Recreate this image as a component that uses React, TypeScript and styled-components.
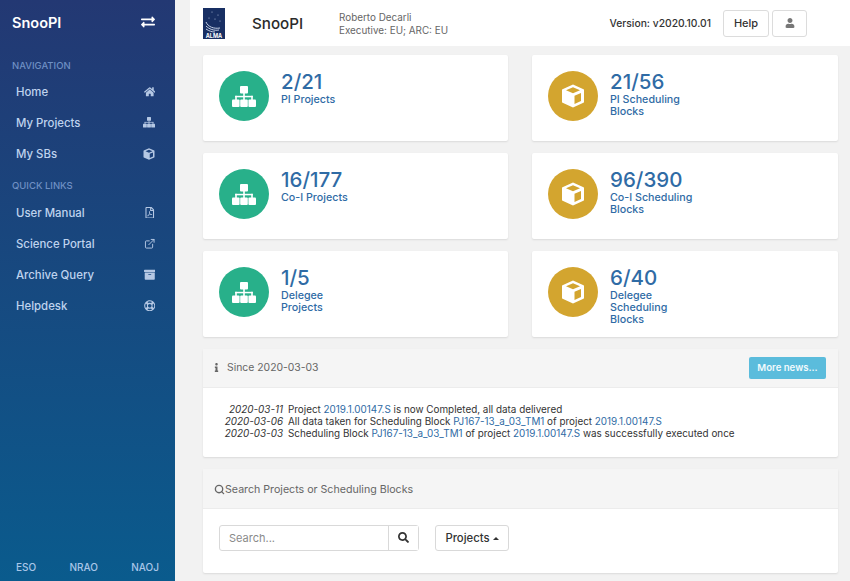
import React from 'react';
import styled, { createGlobalStyle } from 'styled-components';
import {
  FaArchive,
  FaExchangeAlt,
  FaHome,
  FaInfo,
  FaRegFilePdf,
  FaRegLifeRing,
  FaSearch,
  FaUser,
} from 'react-icons/fa';
import { FiExternalLink, FiSearch } from 'react-icons/fi';

const GlobalStyle = createGlobalStyle`
  html, body, #root { margin: 0; height: 100%; }
  body {
    background: #f2f2f2;
    font-family: Inter, "Open Sans", "Liberation Sans", sans-serif;
    overflow: hidden;
  }
  * { box-sizing: border-box; }
`;

const Page = styled.div`
  display: flex;
  width: 850px;
  height: 581px;
  overflow: hidden;
`;

const Sidebar = styled.aside`
  width: 175px;
  flex: none;
  display: flex;
  flex-direction: column;
  background: linear-gradient(180deg, #233873 0%, #0a5b8d 100%);
`;

const Brand = styled.div`
  height: 46px;
  padding: 0 20px 2px 12px;
  display: flex;
  align-items: center;
  justify-content: space-between;
  color: #fff;
  font-size: 14.5px;
  font-weight: 600;
  svg { font-size: 14px; }
`;

const SectionTitle = styled.div<{ $gap: number }>`
  margin-top: ${(p) => p.$gap}px;
  margin-bottom: 2px;
  padding-left: 12px;
  height: 16px;
  line-height: 16px;
  font-size: 9.5px;
  font-weight: 500;
  color: #6f90c4;
`;

const NavList = styled.nav`
  display: flex;
  flex-direction: column;
`;

const QuickList = styled(NavList)`
  margin-top: 1px;
`;

const NavItem = styled.a`
  height: 31px;
  padding: 0 20px 0 16px;
  display: flex;
  align-items: center;
  justify-content: space-between;
  font-size: 11.4px;
  font-weight: 500;
  color: #bfd3ee;
  svg { font-size: 11.5px; color: #b5c8e4; }
`;

const SidebarFooter = styled.div`
  margin-top: auto;
  height: 28px;
  padding: 0 16px;
  display: flex;
  align-items: center;
  justify-content: space-between;
  font-size: 10px;
  font-weight: 500;
  color: #a9c6e8;
`;

const Content = styled.main`
  flex: 1;
  min-width: 0;
  padding-left: 15px;
`;

const Header = styled.header`
  height: 46px;
  padding: 0 43px 0 13px;
  display: flex;
  align-items: center;
  background: #fff;
`;

const AppName = styled.div`
  margin-left: 27px;
  width: 87px;
  font-size: 15.2px;
  font-weight: 500;
  color: #2b2b2b;
`;

const UserInfo = styled.div`
  padding-top: 1px;
  font-size: 9.9px;
  line-height: 12.5px;
  color: #666;
`;

const Version = styled.div`
  margin-left: auto;
  margin-right: 12px;
  font-size: 10.3px;
  font-weight: 500;
  color: #333;
`;

const HeaderButton = styled.button<{ $wide?: boolean }>`
  width: ${(p) => (p.$wide ? 46 : 35)}px;
  height: 27px;
  margin-right: ${(p) => (p.$wide ? 3 : 0)}px;
  padding: 0;
  display: flex;
  align-items: center;
  justify-content: center;
  font: 500 11px Inter, sans-serif;
  color: #333;
  background: #fff;
  border: 1px solid #dcdcdc;
  border-radius: 3px;
  svg { font-size: 10px; color: #777; }
`;

const Body = styled.div`
  padding: 9px 12px 0 13px;
  display: flex;
  flex-direction: column;
`;

const StatGrid = styled.div`
  display: grid;
  grid-template-columns: 305px 306px;
  justify-content: space-between;
  row-gap: 12px;
`;

const Card = styled.section`
  background: #fff;
  border-radius: 2px;
  box-shadow: 0 1px 2px rgba(0, 0, 0, 0.1);
`;

const StatCard = styled(Card)`
  height: 86px;
  padding: 15px 16px 16px;
  display: flex;
  align-items: flex-start;
  gap: 12px;
`;

const StatIcon = styled.div<{ $color: string }>`
  width: 50px;
  height: 50px;
  margin-top: 1px;
  flex: none;
  display: flex;
  align-items: center;
  justify-content: center;
  border-radius: 50%;
  background: ${(p) => p.$color};
  color: #fff;
`;

const StatText = styled.div`
  color: #2f6ba5;
`;

const StatValue = styled.div`
  font-size: 20.5px;
  line-height: 24px;
  font-weight: 500;
`;

const StatLabel = styled.div`
  font-size: 10.7px;
  line-height: 12px;
  font-weight: 500;
  max-width: 85px;
`;

const NewsCard = styled(Card)`
  margin-top: 12px;
  height: 108px;
`;

const CardHeader = styled.div<{ $height: number }>`
  height: ${(p) => p.$height}px;
  display: flex;
  align-items: center;
  background: #f5f5f5;
  border-bottom: 1px solid #ececec;
  font-size: 10.4px;
  color: #666;
`;

const NewsHeader = styled(CardHeader)`
  padding: 0 12px 1px 9px;
  svg { font-size: 9px; color: #666; margin-right: 6px; }
`;

const MoreButton = styled.button`
  margin-left: auto;
  width: 77px;
  height: 22px;
  padding: 0;
  border: 0;
  border-radius: 2px;
  background: #5bbcdc;
  color: #f2fafd;
  font: 600 9.6px Inter, sans-serif;
`;

const NewsRows = styled.div`
  padding-top: 15px;
  display: grid;
  grid-template-columns: 80px 1fr;
  column-gap: 5px;
  font-size: 9.9px;
  line-height: 12px;
  color: #333;
`;

const NewsDate = styled.i`
  text-align: right;
  white-space: nowrap;
`;

const NewsLink = styled.a`
  color: #2f6ba5;
`;

const SearchCard = styled(Card)`
  margin-top: 12px;
  height: 104px;
`;

const SearchHeader = styled(CardHeader)`
  padding: 1px 0 0 11px;
  font-size: 10.65px;
  svg { font-size: 11px; color: #666; stroke-width: 3; }
`;

const SearchBar = styled.div`
  padding: 16px;
  display: flex;
  gap: 16px;
`;

const InputGroup = styled.div`
  width: 200px;
  height: 26px;
  display: flex;
  background: #fff;
  border: 1px solid #d9d9d9;
  border-radius: 3px;
`;

const SearchInput = styled.input`
  flex: 1;
  min-width: 0;
  padding: 0 9px;
  border: 0;
  outline: none;
  background: transparent;
  font: 400 11px Inter, sans-serif;
  &::placeholder { color: #8a8a8a; }
`;

const SearchButton = styled.button`
  width: 30px;
  padding: 0 0 2px;
  display: flex;
  align-items: center;
  justify-content: center;
  border: 0;
  border-left: 1px solid #d9d9d9;
  background: #fff;
  color: #333;
  svg { font-size: 11px; }
`;

const DropdownButton = styled.button`
  width: 74px;
  height: 26px;
  padding: 0;
  display: flex;
  align-items: center;
  justify-content: center;
  gap: 3px;
  background: #fff;
  border: 1px solid #d9d9d9;
  border-radius: 3px;
  font: 500 11.3px Inter, sans-serif;
  color: #333;
`;

const Caret = styled.span`
  width: 0;
  height: 0;
  border-left: 3px solid transparent;
  border-right: 3px solid transparent;
  border-bottom: 3px solid #333;
`;

const AlmaLogo = () => (
  <svg width="22" height="31" viewBox="0 0 22 31" aria-label="ALMA">
    <rect width="22" height="31" fill="#182f63" />
    <g fill="#c6d4ea">
      <circle cx="9" cy="4" r="0.5" />
      <circle cx="15" cy="7" r="0.5" />
      <circle cx="6" cy="10" r="0.5" />
      <circle cx="12" cy="11" r="0.5" />
      <circle cx="17" cy="13" r="0.5" />
    </g>
    <g fill="none" stroke="#d6e0f0" strokeWidth="0.9">
      <path d="M3 14c2 5 8 7 14 6" />
      <path d="M3 18c3 3 8 5 13 4" />
      <path d="M3 21c3 2 6 3 9 3" />
    </g>
    <text x="11" y="29.5" textAnchor="middle" fontSize="5.5" fontWeight="700" fill="#fff" fontFamily="Inter, sans-serif">
      ALMA
    </text>
  </svg>
);

const SitemapIcon = ({ size = 24 }: { size?: number }) => (
  <svg width={size} height={(size * 21) / 24} viewBox="0 0 24 21" fill="currentColor">
    <rect x="8" y="0" width="8" height="7.5" rx="1" />
    <rect x="11.2" y="7" width="1.6" height="7.5" />
    <rect x="3.2" y="9.8" width="17.6" height="1.5" />
    <rect x="3.2" y="9.8" width="1.6" height="4.5" />
    <rect x="19.2" y="9.8" width="1.6" height="4.5" />
    <rect x="0" y="13.5" width="7.6" height="7.5" rx="1" />
    <rect x="8.2" y="13.5" width="7.6" height="7.5" rx="1" />
    <rect x="16.4" y="13.5" width="7.6" height="7.5" rx="1" />
  </svg>
);

const CubeIcon = ({ size = 24 }: { size?: number }) => (
  <svg width={size} height={size} viewBox="0 0 24 24" fill="currentColor">
    <path
      fillRule="evenodd"
      d="M12 .5 22.5 5.2a1 1 0 0 1 .5.9v11.8a1 1 0 0 1-.6.9L12 23.5 1.6 18.8a1 1 0 0 1-.6-.9V6.100a1 1 0 0 1 .5-.9ZM12 3.300 5 6.300l7 3 7-3ZM13.500 11.700v8.200l6.500-3V8.900Z"
    />
  </svg>
);

const navItems = [
  { label: 'Home', icon: <FaHome /> },
  { label: 'My Projects', icon: <SitemapIcon size={12} /> },
  { label: 'My SBs', icon: <CubeIcon size={12} /> },
];

const quickLinks = [
  { label: 'User Manual', icon: <FaRegFilePdf /> },
  { label: 'Science Portal', icon: <FiExternalLink /> },
  { label: 'Archive Query', icon: <FaArchive /> },
  { label: 'Helpdesk', icon: <FaRegLifeRing /> },
];

const stats = [
  { value: '2/21', label: 'PI Projects', block: false },
  { value: '21/56', label: 'PI Scheduling Blocks', block: true },
  { value: '16/177', label: 'Co-I Projects', block: false },
  { value: '96/390', label: 'Co-I Scheduling Blocks', block: true },
  { value: '1/5', label: 'Delegee Projects', block: false },
  { value: '6/40', label: 'Delegee Scheduling Blocks', block: true },
];

const PROJECT = '2019.1.00147.S';
const BLOCK = 'PJ167-13_a_03_TM1';

const App: React.FC = () => (
  <Page>
    <GlobalStyle />
    <Sidebar>
      <Brand>
        SnooPI
        <FaExchangeAlt />
      </Brand>
      <SectionTitle $gap={12}>NAVIGATION</SectionTitle>
      <NavList>
        {navItems.map((item) => (
          <NavItem key={item.label}>
            {item.label}
            {item.icon}
          </NavItem>
        ))}
      </NavList>
      <SectionTitle $gap={9}>QUICK LINKS</SectionTitle>
      <QuickList>
        {quickLinks.map((item) => (
          <NavItem key={item.label}>
            {item.label}
            {item.icon}
          </NavItem>
        ))}
      </QuickList>
      <SidebarFooter>
        <span>ESO</span>
        <span>NRAO</span>
        <span>NAOJ</span>
      </SidebarFooter>
    </Sidebar>
    <Content>
      <Header>
        <AlmaLogo />
        <AppName>SnooPI</AppName>
        <UserInfo>
          Roberto Decarli
          <br />
          Executive: EU; ARC: EU
        </UserInfo>
        <Version>Version: v2020.10.01</Version>
        <HeaderButton $wide>Help</HeaderButton>
        <HeaderButton aria-label="User">
          <FaUser />
        </HeaderButton>
      </Header>
      <Body>
        <StatGrid>
          {stats.map((s) => (
            <StatCard key={s.label}>
              <StatIcon $color={s.block ? '#d3a52f' : '#28b08a'}>
                {s.block ? <CubeIcon /> : <SitemapIcon />}
              </StatIcon>
              <StatText>
                <StatValue>{s.value}</StatValue>
                <StatLabel>{s.label}</StatLabel>
              </StatText>
            </StatCard>
          ))}
        </StatGrid>
        <NewsCard>
          <NewsHeader $height={39}>
            <FaInfo />
            Since 2020-03-03
            <MoreButton>More news...</MoreButton>
          </NewsHeader>
          <NewsRows>
            <NewsDate>2020-03-11</NewsDate>
            <span>
              Project <NewsLink>{PROJECT}</NewsLink> is now Completed, all data delivered
            </span>
            <NewsDate>2020-03-06</NewsDate>
            <span>
              All data taken for Scheduling Block <NewsLink>{BLOCK}</NewsLink> of project{' '}
              <NewsLink>{PROJECT}</NewsLink>
            </span>
            <NewsDate>2020-03-03</NewsDate>
            <span>
              Scheduling Block <NewsLink>{BLOCK}</NewsLink> of project <NewsLink>{PROJECT}</NewsLink> was
              successfully executed once
            </span>
          </NewsRows>
        </NewsCard>
        <SearchCard>
          <SearchHeader $height={40}>
            <FiSearch />
            Search Projects or Scheduling Blocks
          </SearchHeader>
          <SearchBar>
            <InputGroup>
              <SearchInput placeholder="Search..." />
              <SearchButton aria-label="Search">
                <FaSearch />
              </SearchButton>
            </InputGroup>
            <DropdownButton>
              Projects
              <Caret />
            </DropdownButton>
          </SearchBar>
        </SearchCard>
      </Body>
    </Content>
  </Page>
);

export default App;
